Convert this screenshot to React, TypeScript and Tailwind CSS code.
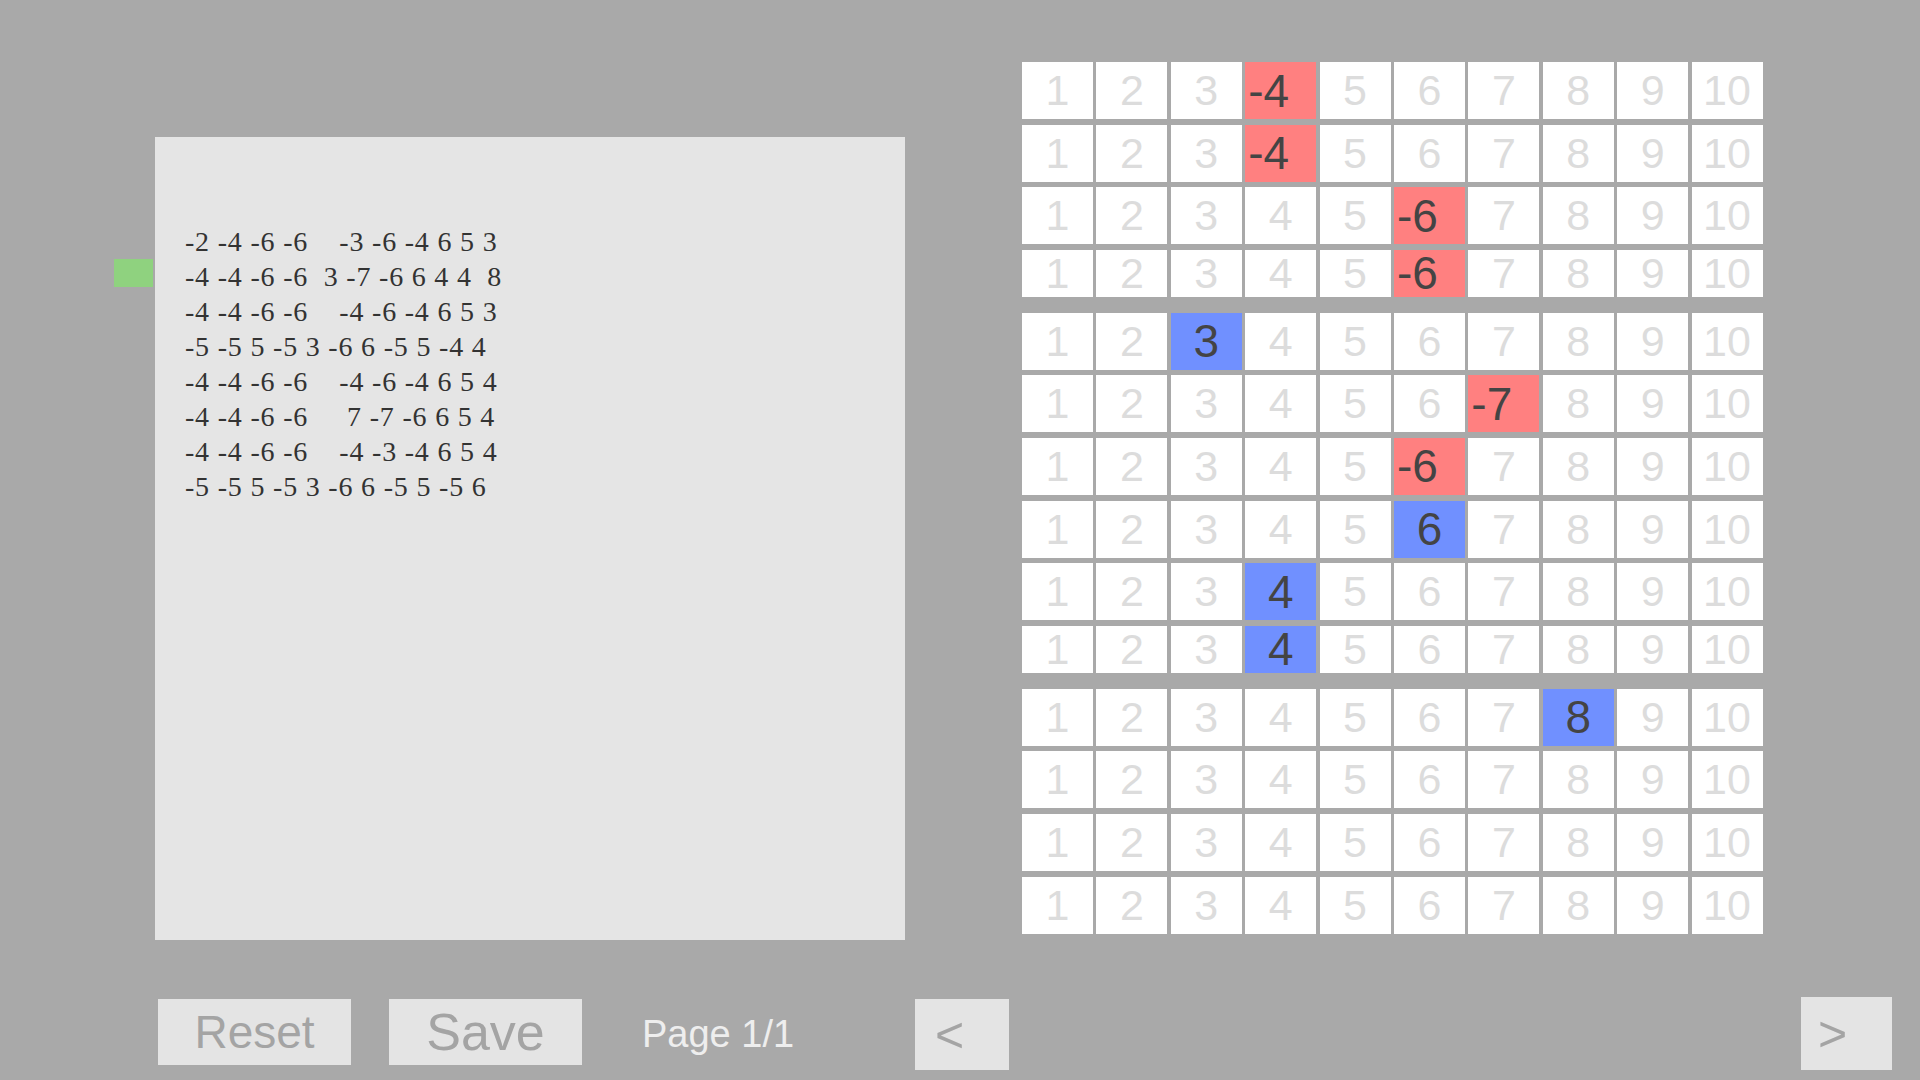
import React from 'react';

// value per grid row: column = |v|, red when negative, blue when positive
const SELECTED: (number | null)[] = [-4, -4, -6, -6, 3, -7, -6, 6, 4, 4, 8, null, null, null];
const SHORT_ROWS = new Set([3, 9]);

const LINES = [
 '-2 -4 -6 -6    -3 -6 -4 6 5 3',
 '-4 -4 -6 -6  3 -7 -6 6 4 4  8',
 '-4 -4 -6 -6    -4 -6 -4 6 5 3',
 '-5 -5 5 -5 3 -6 6 -5 5 -4 4',
 '-4 -4 -6 -6    -4 -6 -4 6 5 4',
 '-4 -4 -6 -6     7 -7 -6 6 5 4',
 '-4 -4 -6 -6    -4 -3 -4 6 5 4',
 '-5 -5 5 -5 3 -6 6 -5 5 -5 6',
];

const sans = { fontFamily: '"Liberation Sans", Arial, sans-serif' };

const Cell = ({ n, value, short }: { n: number; value: number | null; short: boolean }) => {
 const hit = value !== null && Math.abs(value) === n;
 const height = short ? 'h-[47px]' : 'h-[57px]';
 if (!hit) {
 return (
 <div className={`w-[71px] ${height} bg-white flex items-center justify-center text-[43px] leading-none text-[#dcdcdc]`}>
 {n}
 </div>
 );
 }
 const neg = (value as number) < 0;
 return (
 <div
 className={`w-[71px] ${height} flex items-center text-[46px] leading-none text-[#444444] ${
 neg ? 'bg-[#ff8080] justify-start pl-[3px]' : 'bg-[#7090ff] justify-center'
 }`}
 >
 {value}
 </div>
 );
};

const Grid = () => (
 <div className="flex flex-col" style={sans}>
 {SELECTED.map((value, r) => (
 <div key={r} className="h-[62.66px] flex gap-[3.4px]">
 {Array.from({ length: 10 }, (_, i) => (
 <Cell key={i} n={i + 1} value={value} short={SHORT_ROWS.has(r)} />
 ))}
 </div>
 ))}
 </div>
);

const NotePanel = () => (
 <div className="relative w-[750px] h-[803px] bg-[#e5e5e5] pl-[30px] pt-[87px]">
 <div className="absolute left-[-41px] top-[122px] w-[39px] h-[28px] bg-[#8fd27f]" />
 <div
 className="text-[28px] leading-[35px] tracking-[0.8px] text-[#333333] whitespace-pre"
 style={{ fontFamily: '"Liberation Serif", "Times New Roman", serif' }}
 >
 {LINES.map((line, i) => (
 <div key={i}>{line}</div>
 ))}
 </div>
 </div>
);

export default function App() {
 return (
 <div className="w-[1920px] h-[1080px] bg-[#a9a9a9] overflow-hidden flex flex-col">
 <div className="flex items-start h-[940px]">
 <div className="ml-[155px] mt-[137px]">
 <NotePanel />
 </div>
 <div className="ml-[117px] mt-[62px]">
 <Grid />
 </div>
 </div>

 <div className="flex items-start mt-[59px]" style={sans}>
 <button className="ml-[158px] w-[193px] h-[66px] bg-[#e4e4e4] text-[#a4a4a4] text-[46px] leading-none flex items-center justify-center">
 Reset
 </button>
 <button className="ml-[38px] w-[193px] h-[66px] bg-[#e4e4e4] text-[#a4a4a4] text-[52px] leading-none flex items-center justify-center">
 Save
 </button>
 <div className="ml-[60px] w-[273px] h-[70px] flex items-center text-[38px] text-[#eeeeee]">Page 1/1</div>
 <button className="w-[94px] h-[71px] bg-[#e4e4e4] text-[#a4a4a4] text-[50px] leading-none flex items-center pl-[20px]">
 &lt;
 </button>
 <button className="ml-[792px] -mt-[2px] w-[91px] h-[73px] bg-[#e4e4e4] text-[#a4a4a4] text-[50px] leading-none flex items-center pl-[17px]">
 &gt;
 </button>
 </div>
 </div>
 );
}
